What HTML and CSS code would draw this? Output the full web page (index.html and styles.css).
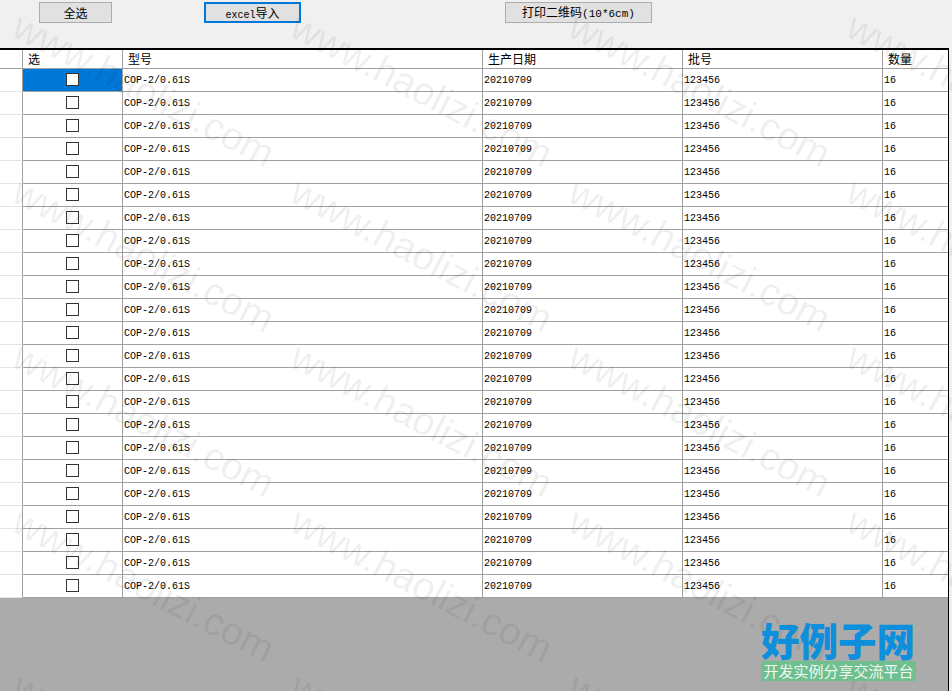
FILE: index.html
```html
<!DOCTYPE html>
<html lang="zh-CN">
<head>
    <meta charset="UTF-8">
    <meta name="viewport" content="width=device-width, initial-scale=1.0">
    <title>打印二维码</title>
    <link rel="stylesheet" href="styles.css">
</head>
<body>
    <div class="page">
        <div class="toolbar">
            <button class="btn btn-all">全选</button>
            <button class="btn btn-import"><span class="latin">excel</span>导入</button>
            <button class="btn btn-print">打印二维码<span class="latin">(10*6cm)</span></button>
        </div>

        <div class="main">
            <table class="grid">
                <colgroup>
                    <col class="col-head">
                    <col class="col-check">
                    <col class="col-model">
                    <col class="col-date">
                    <col class="col-batch">
                    <col class="col-qty">
                </colgroup>
                <thead>
                    <tr><th class="row-head"></th><th>选</th><th>型号</th><th>生产日期</th><th>批号</th><th>数量</th></tr>
                </thead>
                <tbody>
                    <tr class="selected"><td class="row-head"></td><td class="check"><input type="checkbox"></td><td>COP-2/0.61S</td><td>20210709</td><td>123456</td><td>16</td></tr>
                    <tr><td class="row-head"></td><td class="check"><input type="checkbox"></td><td>COP-2/0.61S</td><td>20210709</td><td>123456</td><td>16</td></tr>
                    <tr><td class="row-head"></td><td class="check"><input type="checkbox"></td><td>COP-2/0.61S</td><td>20210709</td><td>123456</td><td>16</td></tr>
                    <tr><td class="row-head"></td><td class="check"><input type="checkbox"></td><td>COP-2/0.61S</td><td>20210709</td><td>123456</td><td>16</td></tr>
                    <tr><td class="row-head"></td><td class="check"><input type="checkbox"></td><td>COP-2/0.61S</td><td>20210709</td><td>123456</td><td>16</td></tr>
                    <tr><td class="row-head"></td><td class="check"><input type="checkbox"></td><td>COP-2/0.61S</td><td>20210709</td><td>123456</td><td>16</td></tr>
                    <tr><td class="row-head"></td><td class="check"><input type="checkbox"></td><td>COP-2/0.61S</td><td>20210709</td><td>123456</td><td>16</td></tr>
                    <tr><td class="row-head"></td><td class="check"><input type="checkbox"></td><td>COP-2/0.61S</td><td>20210709</td><td>123456</td><td>16</td></tr>
                    <tr><td class="row-head"></td><td class="check"><input type="checkbox"></td><td>COP-2/0.61S</td><td>20210709</td><td>123456</td><td>16</td></tr>
                    <tr><td class="row-head"></td><td class="check"><input type="checkbox"></td><td>COP-2/0.61S</td><td>20210709</td><td>123456</td><td>16</td></tr>
                    <tr><td class="row-head"></td><td class="check"><input type="checkbox"></td><td>COP-2/0.61S</td><td>20210709</td><td>123456</td><td>16</td></tr>
                    <tr><td class="row-head"></td><td class="check"><input type="checkbox"></td><td>COP-2/0.61S</td><td>20210709</td><td>123456</td><td>16</td></tr>
                    <tr><td class="row-head"></td><td class="check"><input type="checkbox"></td><td>COP-2/0.61S</td><td>20210709</td><td>123456</td><td>16</td></tr>
                    <tr><td class="row-head"></td><td class="check"><input type="checkbox"></td><td>COP-2/0.61S</td><td>20210709</td><td>123456</td><td>16</td></tr>
                    <tr><td class="row-head"></td><td class="check"><input type="checkbox"></td><td>COP-2/0.61S</td><td>20210709</td><td>123456</td><td>16</td></tr>
                    <tr><td class="row-head"></td><td class="check"><input type="checkbox"></td><td>COP-2/0.61S</td><td>20210709</td><td>123456</td><td>16</td></tr>
                    <tr><td class="row-head"></td><td class="check"><input type="checkbox"></td><td>COP-2/0.61S</td><td>20210709</td><td>123456</td><td>16</td></tr>
                    <tr><td class="row-head"></td><td class="check"><input type="checkbox"></td><td>COP-2/0.61S</td><td>20210709</td><td>123456</td><td>16</td></tr>
                    <tr><td class="row-head"></td><td class="check"><input type="checkbox"></td><td>COP-2/0.61S</td><td>20210709</td><td>123456</td><td>16</td></tr>
                    <tr><td class="row-head"></td><td class="check"><input type="checkbox"></td><td>COP-2/0.61S</td><td>20210709</td><td>123456</td><td>16</td></tr>
                    <tr><td class="row-head"></td><td class="check"><input type="checkbox"></td><td>COP-2/0.61S</td><td>20210709</td><td>123456</td><td>16</td></tr>
                    <tr><td class="row-head"></td><td class="check"><input type="checkbox"></td><td>COP-2/0.61S</td><td>20210709</td><td>123456</td><td>16</td></tr>
                    <tr><td class="row-head"></td><td class="check"><input type="checkbox"></td><td>COP-2/0.61S</td><td>20210709</td><td>123456</td><td>16</td></tr>
                </tbody>
            </table>
        </div>
    </div>

    <!-- site watermark lies over everything -->
    <div class="watermark">
        <span>www.haolizi.com</span><span>www.haolizi.com</span><span>www.haolizi.com</span><span>www.haolizi.com</span>
        <span>www.haolizi.com</span><span>www.haolizi.com</span><span>www.haolizi.com</span><span>www.haolizi.com</span>
        <span>www.haolizi.com</span><span>www.haolizi.com</span><span>www.haolizi.com</span><span>www.haolizi.com</span>
        <span>www.haolizi.com</span><span>www.haolizi.com</span><span>www.haolizi.com</span><span>www.haolizi.com</span>
        <span>www.haolizi.com</span><span>www.haolizi.com</span><span>www.haolizi.com</span><span>www.haolizi.com</span>
    </div>

    <div class="logo">
        <div class="logo-name">好例子网</div>
        <div class="logo-tag">开发实例分享交流平台</div>
    </div>
</body>
</html>
```

FILE: styles.css
```css
html, body {
    margin: 0;
    height: 100%;
    overflow: hidden;
}
body {
    font-family: "Noto Sans CJK SC", "Liberation Mono", monospace;
    font-size: 12px;
    background-color: #f0f0f0;
    color: #000;
}
.page {
    display: flex;
    flex-direction: column;
    height: 100vh;
}
.latin {
    font-family: "Liberation Mono", monospace;
    font-size: 10px;
}

/* toolbar */
.toolbar {
    display: flex;
    align-items: flex-start;
    box-sizing: border-box;
    height: 48px;
    padding: 2px 0 0 39px;
}
.btn {
    box-sizing: border-box;
    height: 21px;
    padding: 0;
    font: inherit;
    line-height: 17px;
    color: #000;
    background-color: #e1e1e1;
    border: 1px solid #adadad;
}
.btn-all {
    width: 73px;
}
.btn-import {
    width: 97px;
    margin-left: 92px;
    border: 2px solid #0078d7;
}
.btn-print {
    width: 147px;
    margin-left: 204px;
}
.btn-print .latin {
    font-size: 11px;
}

/* data grid */
.main {
    flex: 1;
    box-sizing: border-box;
    width: 949px;
    background-color: #ababab;
    border-top: 2px solid #000;
    border-right: 1px solid #000;
}
.grid {
    width: 948px;
    table-layout: fixed;
    border-collapse: separate;
    border-spacing: 0;
    background-color: #fff;
}
.col-head { width: 23px; }
.col-check { width: 100px; }
.col-model { width: 360px; }
.col-date { width: 200px; }
.col-batch { width: 200px; }
.col-qty { width: 65px; }

.grid th,
.grid td {
    box-sizing: border-box;
    overflow: hidden;
    white-space: nowrap;
    border-right: 1px solid #a0a0a0;
    border-bottom: 1px solid #a0a0a0;
}
.grid th {
    height: 19px;
    padding: 0 0 0 5px;
    font-weight: normal;
    text-align: left;
    line-height: 18px;
}
.grid td {
    height: 23px;
    padding: 1px 0 0 1px;
    font-family: "Liberation Mono", monospace;
    font-size: 10px;
    line-height: 21px;
}
.grid td.row-head {
    background-color: #fff;
    border-bottom-color: #e4e4e4;
}
.grid tr > :last-child {
    border-right: 0;
}
.grid td.check {
    padding: 4px 0 0;
    text-align: center;
    vertical-align: top;
    line-height: 0;
}
.check input {
    appearance: none;
    box-sizing: border-box;
    display: inline-block;
    width: 13px;
    height: 13px;
    margin: 0 1px 0 0;
    background-color: #fff;
    border: 1px solid #333;
    vertical-align: top;
}
.selected .check {
    background-color: #0078d7;
}

/* overlays */
.watermark {
    position: absolute;
    top: 0;
    left: 0;
    width: 100%;
    height: 100%;
    overflow: hidden;
    display: grid;
    grid-template-columns: repeat(4, 278px);
    grid-auto-rows: 165px;
    pointer-events: none;
}
.watermark span {
    font-family: "Liberation Sans", sans-serif;
    font-size: 39px;
    line-height: 39px;
    white-space: nowrap;
    color: rgba(0, 0, 0, 0.07);
    transform: translate(25px, 6px) rotate(27.5deg);
    transform-origin: 0 0;
}
.logo {
    position: absolute;
    left: 761px;
    top: 619px;
    width: 155px;
}
.logo-name {
    font-size: 38.5px;
    font-weight: 900;
    line-height: 41px;
    white-space: nowrap;
    color: #0d8fdc;
}
.logo-tag {
    margin-top: 1px;
    height: 20px;
    font-size: 15px;
    line-height: 20px;
    text-align: center;
    white-space: nowrap;
    color: #eef7f0;
    background-color: #6fbf8f;
}
```
